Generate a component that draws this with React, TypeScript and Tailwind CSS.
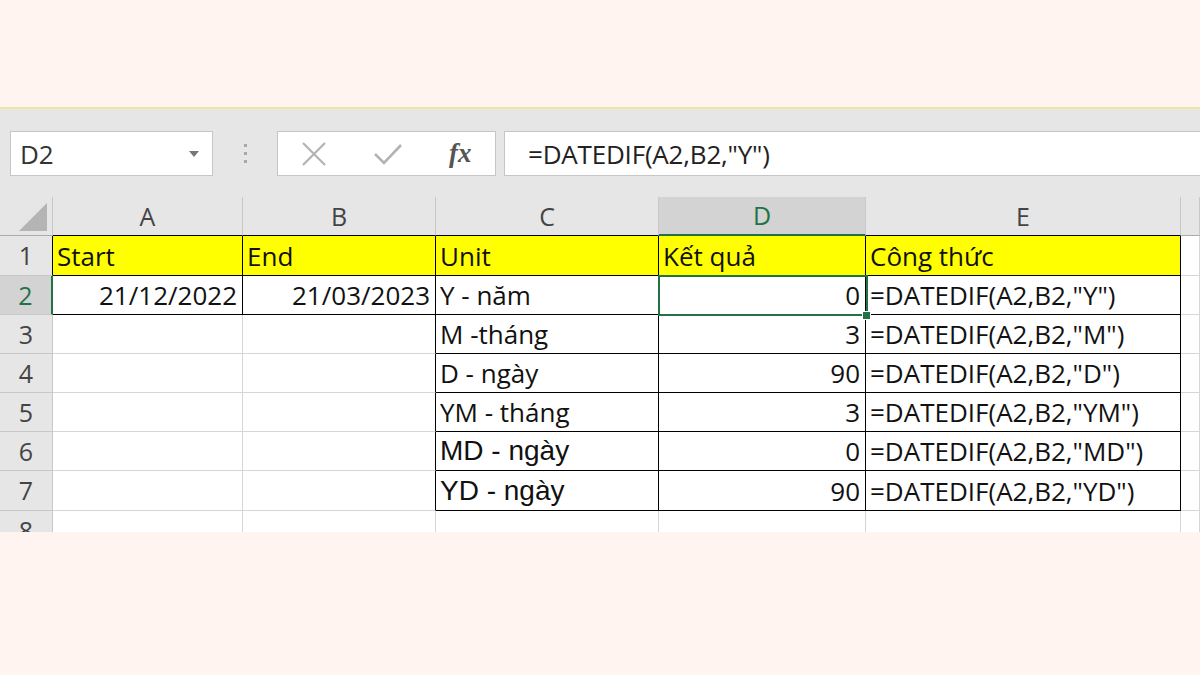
import React from 'react';

const cols = ['A', 'B', 'C', 'D', 'E', ''];

const data: string[][] = [
  ['Start', 'End', 'Unit', 'Kết quả', 'Công thức', ''],
  ['21/12/2022', '21/03/2023', 'Y - năm', '0', '=DATEDIF(A2,B2,"Y")', ''],
  ['', '', 'M -tháng', '3', '=DATEDIF(A2,B2,"M")', ''],
  ['', '', 'D - ngày', '90', '=DATEDIF(A2,B2,"D")', ''],
  ['', '', 'YM - tháng', '3', '=DATEDIF(A2,B2,"YM")', ''],
  ['', '', 'MD - ngày', '0', '=DATEDIF(A2,B2,"MD")', ''],
  ['', '', 'YD - ngày', '90', '=DATEDIF(A2,B2,"YD")', ''],
  ['', '', '', '', '', ''],
];

// cells with thin black border
const bordered = (r: number, c: number) =>
  (r <= 1 && c >= 0 && c <= 4) || (r <= 6 && c >= 2 && c <= 4);

function Cell({ r, c, text }: { r: number; c: number; text: string }) {
  const right = bordered(r, c) || bordered(r, c + 1) ? 'border-r-black' : 'border-r-[#d6d6d6]';
  const bottom = bordered(r, c) || bordered(r + 1, c) ? 'border-b-black' : 'border-b-[#d6d6d6]';
  const fill = r === 0 && c <= 4 ? 'bg-[#ffff00]' : 'bg-white';
  const isNum = (c === 3 && r > 0) || (r === 1 && c <= 1);
  const arial = c === 2 && (r === 5 || r === 6);
  return (
    <div
      className={`flex items-center overflow-hidden whitespace-nowrap border-r border-b ${right} ${bottom} ${fill} ${
        isNum ? 'justify-end pr-[5px]' : 'pl-[4px]'
      } ${
        arial
          ? "font-['Liberation_Sans',Arial,sans-serif] text-[28px]"
          : "font-['Open_Sans',sans-serif] text-[26px]"
      } leading-none text-[#111]`}
    >
      {text}
    </div>
  );
}

export default function App() {
  return (
    <div className="w-[1200px] h-[675px] bg-[#fff4f0] overflow-hidden font-['Open_Sans',sans-serif]">
      <div className="h-[107px]" />
      <div className="h-[2px] bg-[#ebe6a6]" />

      {/* formula bar */}
      <div className="h-[88px] bg-[#e6e6e6] flex items-start pt-[22px] pl-[10px]">
        <div className="w-[203px] h-[45px] bg-white border border-[#c6c6c6] flex items-center justify-between pl-[9px] pr-[13px]">
          <span className="text-[26px] text-[#333] leading-none">D2</span>
          <svg width="10" height="6" viewBox="0 0 10 6">
            <path d="M0 0 L10 0 L5 6 Z" fill="#777" />
          </svg>
        </div>
        <div className="w-[64px] h-[45px] flex flex-col items-center justify-center gap-[5px]">
          <span className="w-[3px] h-[3px] bg-[#a8a8a8]" />
          <span className="w-[3px] h-[3px] bg-[#a8a8a8]" />
          <span className="w-[3px] h-[3px] bg-[#a8a8a8]" />
        </div>
        <div className="w-[219px] h-[45px] bg-white border border-[#c6c6c6] flex items-center pl-[23px]">
          <svg width="26" height="26" viewBox="0 0 26 26">
            <path d="M2 2 L24 24 M24 2 L2 24" stroke="#b3b3b3" strokeWidth="2.2" fill="none" />
          </svg>
          <svg width="30" height="26" viewBox="0 0 30 26" className="ml-[46px]">
            <path d="M2 13 L11 22 L28 4" stroke="#b3b3b3" strokeWidth="2.6" fill="none" />
          </svg>
          <span className="ml-[46px] font-['Liberation_Serif',serif] italic font-bold text-[27px] text-[#555] leading-none">fx</span>
        </div>
        <div className="ml-[8px] flex-1 h-[45px] bg-white border border-[#c6c6c6] border-r-0 flex items-center pl-[23px]">
          <span className="text-[26px] text-[#222] leading-none tracking-[-0.2px]">=DATEDIF(A2,B2,"Y")</span>
        </div>
      </div>

      {/* grid */}
      <div className="relative h-[335px] overflow-hidden grid grid-cols-[53px_190px_193px_223px_207px_315px_1fr] grid-rows-[39px_40px_39px_39px_39px_39px_39px_40px_40px] bg-white">
        {/* corner */}
        <div className="bg-[#e6e6e6] border-r border-b border-r-[#c8c8c8] border-b-[#ababab] flex items-end justify-end pr-[5px] pb-[4px]">
          <svg width="28" height="28" viewBox="0 0 28 28">
            <path d="M28 0 L28 28 L0 28 Z" fill="#b4b4b4" />
          </svg>
        </div>
        {cols.map((c, i) => (
          <div
            key={'h' + i}
            className={`flex items-center justify-center text-[25px] leading-none border-r border-r-[#c8c8c8] ${
              i === 3
                ? 'bg-[#d3d3d3] text-[#217346] border-b-2 border-b-[#217346]'
                : `bg-[#e6e6e6] text-[#444] border-b ${i <= 4 ? 'border-b-black' : 'border-b-[#ababab]'}`
            }`}
          >
            {c}
          </div>
        ))}

        {data.map((row, r) => (
          <React.Fragment key={'r' + r}>
            <div
              className={`flex items-center justify-center text-[25px] leading-none border-b border-b-[#c8c8c8] ${
                r === 1
                  ? 'bg-[#d3d3d3] text-[#217346] border-r-2 border-r-[#217346]'
                  : `bg-[#e6e6e6] text-[#444] border-r ${bordered(r, 0) ? 'border-r-black' : 'border-r-[#c8c8c8]'}`
              }`}
            >
              {r + 1}
            </div>
            {row.map((t, c) => (
              <Cell key={c} r={r} c={c} text={t} />
            ))}
          </React.Fragment>
        ))}

        {/* selected cell D2 */}
        <div className="absolute left-[658px] top-[78px] w-[210px] h-[41px] border-2 border-[#217346] pointer-events-none" />
        <div className="absolute left-[862px] top-[114px] w-[9px] h-[9px] bg-[#217346] border border-white" />
      </div>
    </div>
  );
}
